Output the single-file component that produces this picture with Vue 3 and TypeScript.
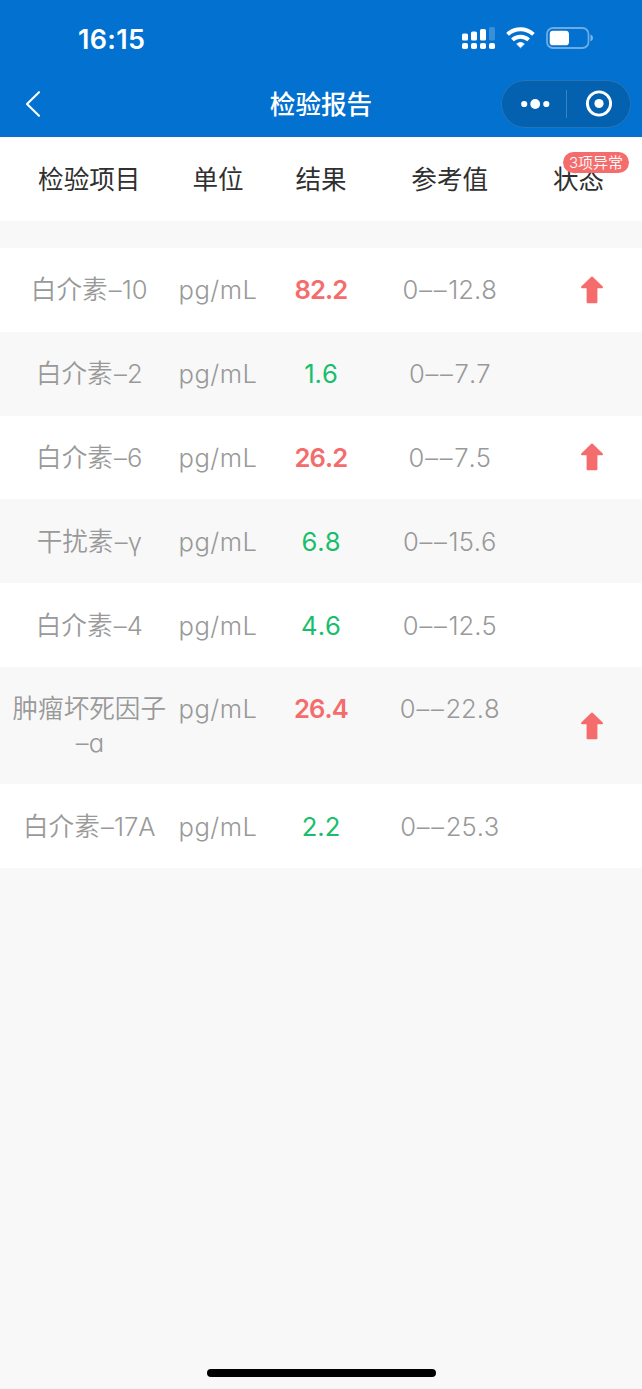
<script setup lang="ts">
interface ReportRow {
  name: string[]
  unit: string
  result: string
  range: [string, string]
  high: boolean
}

const headers = ['检验项目', '单位', '结果', '参考值', '状态']

const rows: ReportRow[] = [
  { name: ['白介素', '–', '10'], unit: 'pg/mL', result: '82.2', range: ['0', '12.8'], high: true },
  { name: ['白介素', '–', '2'], unit: 'pg/mL', result: '1.6', range: ['0', '7.7'], high: false },
  { name: ['白介素', '–', '6'], unit: 'pg/mL', result: '26.2', range: ['0', '7.5'], high: true },
  { name: ['干扰素', '–', 'γ'], unit: 'pg/mL', result: '6.8', range: ['0', '15.6'], high: false },
  { name: ['白介素', '–', '4'], unit: 'pg/mL', result: '4.6', range: ['0', '12.5'], high: false },
  { name: ['肿瘤坏死因子', '–', 'ɑ'], unit: 'pg/mL', result: '26.4', range: ['0', '22.8'], high: true },
  { name: ['白介素', '–', '17A'], unit: 'pg/mL', result: '2.2', range: ['0', '25.3'], high: false },
]

const abnormalCount = rows.filter((r) => r.high).length
</script>

<template>
  <div class="screen">
    <header class="top">
      <div class="statusbar">
        <span class="clock">16:15</span>
        <svg class="indicators" width="134" height="26" viewBox="0 0 134 26">
          <g fill="#fff">
            <rect x="2" y="10.5" width="6" height="7" rx="1.6" />
            <rect x="11" y="8.5" width="6" height="9" rx="1.6" />
            <rect x="20" y="6" width="6" height="11.5" rx="1.6" />
            <rect x="29" y="4" width="6" height="13.5" rx="1.6" opacity=".22" />
            <rect x="2" y="20" width="6" height="6" rx="1.8" />
            <rect x="11" y="20" width="6" height="6" rx="1.8" />
            <rect x="20" y="20" width="6" height="6" rx="1.8" />
            <rect x="29" y="20" width="6" height="6" rx="1.8" />
            <path d="M60.5 24.8l-3.9-3.8q3.9-3.3 7.8 0z" stroke="#fff" stroke-width=".6" stroke-linejoin="round" />
          </g>
          <g fill="none" stroke="#fff" stroke-width="4">
            <path d="M47.6 11.4a18.8 18.8 0 0 1 25.8 0" />
            <path d="M52.4 16.9a11.8 11.8 0 0 1 16.2 0" />
          </g>
          <rect x="87" y="5" width="41.5" height="20" rx="6" fill="none" stroke="#fff" stroke-width="1.8" opacity=".42" />
          <rect x="89.7" y="7.7" width="19.3" height="14.6" rx="3.4" fill="#fff" />
          <path d="M130.5 11.5q2.5.8 2.5 3.5t-2.5 3.5z" fill="#fff" opacity=".5" />
        </svg>
      </div>
      <div class="nav">
        <svg class="back" width="18" height="28" viewBox="0 0 18 28">
          <path d="M15 2.2L3 14l12 11.8" fill="none" stroke="#fff" stroke-width="2.1" stroke-linecap="round" stroke-linejoin="round" />
        </svg>
        <h1 class="title">检验报告</h1>
        <div class="capsule">
          <svg width="130" height="48" viewBox="0 0 130 48">
            <g fill="#fff">
              <circle cx="23.2" cy="24" r="3.1" />
              <circle cx="34.2" cy="24" r="4.9" />
              <circle cx="45.3" cy="24" r="3.1" />
              <circle cx="98" cy="23.5" r="4.6" />
            </g>
            <path d="M65.5 10v28" stroke="#fff" stroke-opacity=".22" />
            <circle cx="98" cy="23.5" r="11.6" fill="none" stroke="#fff" stroke-width="2.9" />
          </svg>
        </div>
      </div>
    </header>

    <div class="row head">
      <div v-for="h in headers" :key="h" class="cell">{{ h }}</div>
      <span class="badge">{{ abnormalCount }}项异常</span>
    </div>

    <main class="list">
      <div v-for="(r, i) in rows" :key="i" class="row item">
        <div class="cell name">
          <span>{{ r.name[0] }}</span><wbr><span class="tail"><span class="dash">{{ r.name[1] }}</span>{{ r.name[2] }}</span>
        </div>
        <div class="cell unit">{{ r.unit }}</div>
        <div class="cell result" :class="{ high: r.high }">{{ r.result }}</div>
        <div class="cell range">{{ r.range[0] }}<span class="dash">––</span>{{ r.range[1] }}</div>
        <div class="cell state">
          <svg v-if="r.high" width="24" height="28" viewBox="0 0 24 28">
            <path d="M12 1.5L22 11.3H16.4V26.3H7.6V11.3H2z" fill="#f56c6c" stroke="#f56c6c" stroke-width="2" stroke-linejoin="round" />
          </svg>
        </div>
      </div>
    </main>
    <div class="home"></div>
  </div>
</template>

<style>
body {
  margin: 0;
  background: #f8f8f8;
}
</style>

<style scoped>
.screen {
  position: relative;
  width: 642px;
  height: 1389px;
  overflow: hidden;
  background: #f8f8f8;
  font-family: Inter, "Noto Sans CJK SC", sans-serif;
  font-size: 25.6px;
  line-height: 33.28px;
}
.top {
  height: 136.6px;
  background: #0271cf;
  color: #fff;
}
.statusbar {
  display: flex;
  justify-content: space-between;
  height: 71px;
  padding: 0 48px 0 78px;
}
.clock {
  margin-top: 23px;
  font-size: 27px;
  font-weight: 600;
  letter-spacing: 0.3px;
}
.indicators {
  margin-top: 23px;
}
.nav {
  display: grid;
  grid-template-columns: 140px 1fr 140px;
  align-items: center;
  height: 65px;
}
.back {
  margin-left: 24px;
}
.title {
  margin: 3px 0 0;
  text-align: center;
  font-size: 25.6px;
  font-weight: 500;
}
.capsule {
  justify-self: end;
  box-sizing: border-box;
  width: 130px;
  height: 48px;
  margin-right: 11px;
  border-radius: 24px;
  background: #0361b0;
  box-shadow: inset 0 0 0 1px rgba(255, 255, 255, 0.13);
}
.capsule svg {
  display: block;
}
.row {
  position: relative;
  display: grid;
  grid-template-columns: 6fr 4fr 4fr 6fr 4fr;
  padding: 25.3px 12px;
  text-align: center;
}
.head {
  margin-bottom: 27px;
  padding: 26.6px 12px 24.3px;
  background: #fff;
  color: #303030;
}
.badge {
  position: absolute;
  top: 15.8px;
  left: 563px;
  width: 66px;
  height: 21px;
  border-radius: 11px;
  background: #f56c6c;
  color: #fff;
  font-size: 15px;
  font-weight: 350;
  line-height: 22px;
}
.item {
  color: #999;
  font-weight: 350;
  font-kerning: none;
}
.item:nth-child(odd) {
  background: #fff;
}
.name {
  margin: 0 -4px;
}
.tail {
  white-space: nowrap;
}
.name .dash {
  letter-spacing: 0.2px;
  margin-left: 1.2px;
}
.unit {
  letter-spacing: 0.5px;
}
.range .dash {
  margin-left: 0.8px;
  letter-spacing: 1.7px;
}
.result {
  color: #19be6b;
  font-weight: 400;
}
.result.high {
  color: #f56c6c;
  font-weight: 600;
  letter-spacing: -0.9px;
}
.state {
  display: flex;
  align-items: center;
  justify-content: center;
  padding-left: 27px;
}
.home {
  position: absolute;
  left: 207px;
  bottom: 12px;
  width: 229px;
  height: 8px;
  border-radius: 4px;
  background: #000;
}
</style>
